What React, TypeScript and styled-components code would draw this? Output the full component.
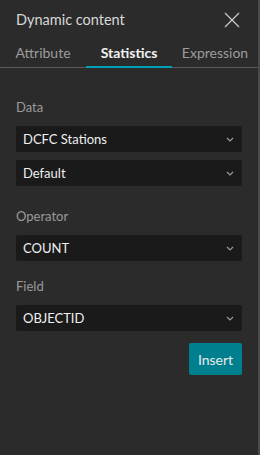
import styled, { createGlobalStyle } from 'styled-components';

const Global = createGlobalStyle`
    html, body {
        margin: 0;
        padding: 0;
        background: #2b2b2b;
    }
    * {
        box-sizing: border-box;
    }
`;

const Panel = styled.div`
    width: 260px;
    height: 455px;
    background: #2b2b2b;
    border-right: 2px solid #4a4a4a;
    font-family: Lato, "Noto Sans", sans-serif;
    color: #e6e6e6;
    display: flex;
    flex-direction: column;
`;

const Header = styled.div`
    display: flex;
    align-items: center;
    justify-content: space-between;
    height: 38px;
    padding: 1px 18px 0 16px;
    h1{
        margin: 0;
        font-size: 14.5px;
        font-weight: 400;
        color: #d8d8d8;
    }
`;

const CloseButton = styled.button`
    background: none;
    border: none;
    padding: 0;
    width: 16px;
    height: 16px;
    display: flex;
`;

const Tabs = styled.div`
    display: flex;
    height: 30px;
    border-bottom: 1px solid #5a5a5a;
`;

const Tab = styled.div<{ active?: boolean }>`
    flex: 1;
    display: flex;
    align-items: center;
    justify-content: center;
    font-size: 14px;
    font-weight: ${p => p.active ? 700 : 400};
    color: ${p => p.active ? '#f2f2f2' : '#9c9c9c'};
    border-bottom: 2px solid ${p => p.active ? '#00a0b8' : 'transparent'};
    margin-bottom: -1px;
`;

const Body = styled.div`
    padding: 30px 16px 0 16px;
    display: flex;
    flex-direction: column;
`;

const Label = styled.div`
    font-size: 13px;
    color: #9a9a9a;
    line-height: 18px;
    margin-bottom: 2px;
`;

const Select = styled.div`
    height: 26px;
    background: #1a1a1a;
    border-radius: 2px;
    display: flex;
    align-items: center;
    justify-content: space-between;
    padding: 0 8px 0 7px;
    font-size: 13px;
    color: #efefef;
`;

const Group = styled.div<{ spacing: number }>`
    display: flex;
    flex-direction: column;
    gap: 8px;
    margin-bottom: ${p => p.spacing}px;
`;

const Actions = styled.div`
    display: flex;
    justify-content: flex-end;
`;

const InsertButton = styled.button`
    background: #00808f;
    color: #eaeaea;
    border: none;
    border-radius: 2px;
    height: 32px;
    width: 53px;
    font-family: inherit;
    font-size: 14px;
`;

const Chevron = () => (
    <svg width="8" height="5" viewBox="0 0 8 5">
        <path d="M1 1l3 3 3-3" fill="none" stroke="#9a9a9a" strokeWidth="1.2" />
    </svg>
);

const Dropdown = ({ value }: any) => (
    <Select>
        <span>{value}</span>
        <Chevron />
    </Select>
);

export default function App() {
    return (
        <Panel>
            <Global />
            <Header>
                <h1>Dynamic content</h1>
                <CloseButton>
                    <svg width="16" height="16" viewBox="0 0 16 16">
                        <path d="M1 1l14 14M15 1L1 15" stroke="#d0d0d0" strokeWidth="1.1" />
                    </svg>
                </CloseButton>
            </Header>
            <Tabs>
                <Tab>Attribute</Tab>
                <Tab active>Statistics</Tab>
                <Tab>Expression</Tab>
            </Tabs>
            <Body>
                <Group spacing={21}>
                    <Label>Data</Label>
                    <Dropdown value="DCFC Stations" />
                    <Dropdown value="Default" />
                </Group>
                <Group spacing={16}>
                    <Label>Operator</Label>
                    <Dropdown value="COUNT" />
                </Group>
                <Group spacing={12}>
                    <Label>Field</Label>
                    <Dropdown value="OBJECTID" />
                </Group>
                <Actions>
                    <InsertButton>Insert</InsertButton>
                </Actions>
            </Body>
        </Panel>
    );
}
